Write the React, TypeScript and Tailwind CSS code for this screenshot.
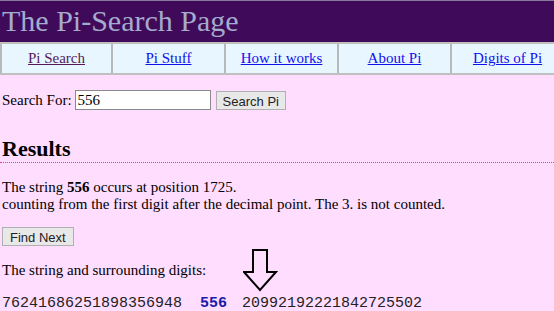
import React from 'react';

const navItems = [
  { label: 'Pi Search', visited: true },
  { label: 'Pi Stuff', visited: false },
  { label: 'How it works', visited: false },
  { label: 'About Pi', visited: false },
  { label: 'Digits of Pi', visited: false },
];

function DownArrow() {
  return (
    <svg width="35" height="43" viewBox="0 0 35 43" className="block">
      <path
        d="M10 1 H24 V23 H33 L17 41 L1 23 H10 Z"
        fill="none"
        stroke="#000"
        strokeWidth="2"
      />
    </svg>
  );
}

export default function App() {
  return (
    <div className="w-[554px] h-[311px] overflow-hidden bg-[#ffddff] text-black font-['Liberation_Serif',serif] text-[15px]">
      {/* header */}
      <div className="h-[42px] bg-[#3f0a5a] border-t border-[#8a7a9a] px-[2px]">
        <h1 className="text-[30px] leading-[40px] text-[#a4accc]">The Pi-Search Page</h1>
      </div>

      {/* nav */}
      <div className="flex w-[566px] h-[33px] border-y-2 border-[#c0c0c0] bg-[#e8f7ff]">
        {navItems.map((item, i) => (
          <div
            key={item.label}
            className={`w-[113px] shrink-0 flex items-center justify-center border-[#b8b8b8] ${
              i === 0 ? 'border-l-2 border-r-2' : 'border-r-2'
            }`}
          >
            <a
              href="#"
              className={`underline ${item.visited ? 'text-[#551a5b]' : 'text-[#1010ee]'}`}
            >
              {item.label}
            </a>
          </div>
        ))}
      </div>

      {/* search */}
      <div className="flex items-center mt-[14px] px-[2px] gap-[3px]">
        <span>Search For:</span>
        <input
          type="text"
          defaultValue="556"
          className="w-[136px] h-[20px] bg-white border border-[#8a8a8a] px-[2px] text-[15px] font-['Liberation_Serif',serif] outline-none"
        />
        <button className="h-[19px] px-[6px] ml-[2px] bg-[#e8e8e8] border border-[#b0b0b0] text-[13px] font-['Liberation_Sans',Arial,sans-serif] text-[#222]">
          Search Pi
        </button>
      </div>

      {/* results */}
      <h2 className="mt-[26px] px-[2px] text-[22px] leading-[22px] font-bold">Results</h2>
      <div className="mt-[2px] border-t border-dotted border-[#f04070]" />

      <p className="mt-[16px] px-[2px] leading-[17px]">
        The string <b>556</b> occurs at position 1725.
        <br />
        counting from the first digit after the decimal point. The 3. is not counted.
      </p>

      <div className="mt-[13px] px-[2px]">
        <button className="h-[19px] px-[7px] bg-[#e8e8e8] border border-[#b0b0b0] text-[13px] font-['Liberation_Sans',Arial,sans-serif] text-[#222]">
          Find Next
        </button>
      </div>

      <div className="flex items-end px-[2px] mt-[1px]">
        <span className="leading-[17px] mb-[13px]">The string and surrounding digits:</span>
        <div className="ml-[37px]">
          <DownArrow />
        </div>
      </div>

      <div className="px-[2px] mt-[3px] font-['Liberation_Mono','Courier_New',monospace] text-[15px] leading-[17px] whitespace-pre text-[#222]">
        76241686251898356948{'  '}
        <b className="text-[#1a1aa8]">556</b>
        {' '}
        <span className="ml-[6px]">20992192221842725502</span>
      </div>
    </div>
  );
}
